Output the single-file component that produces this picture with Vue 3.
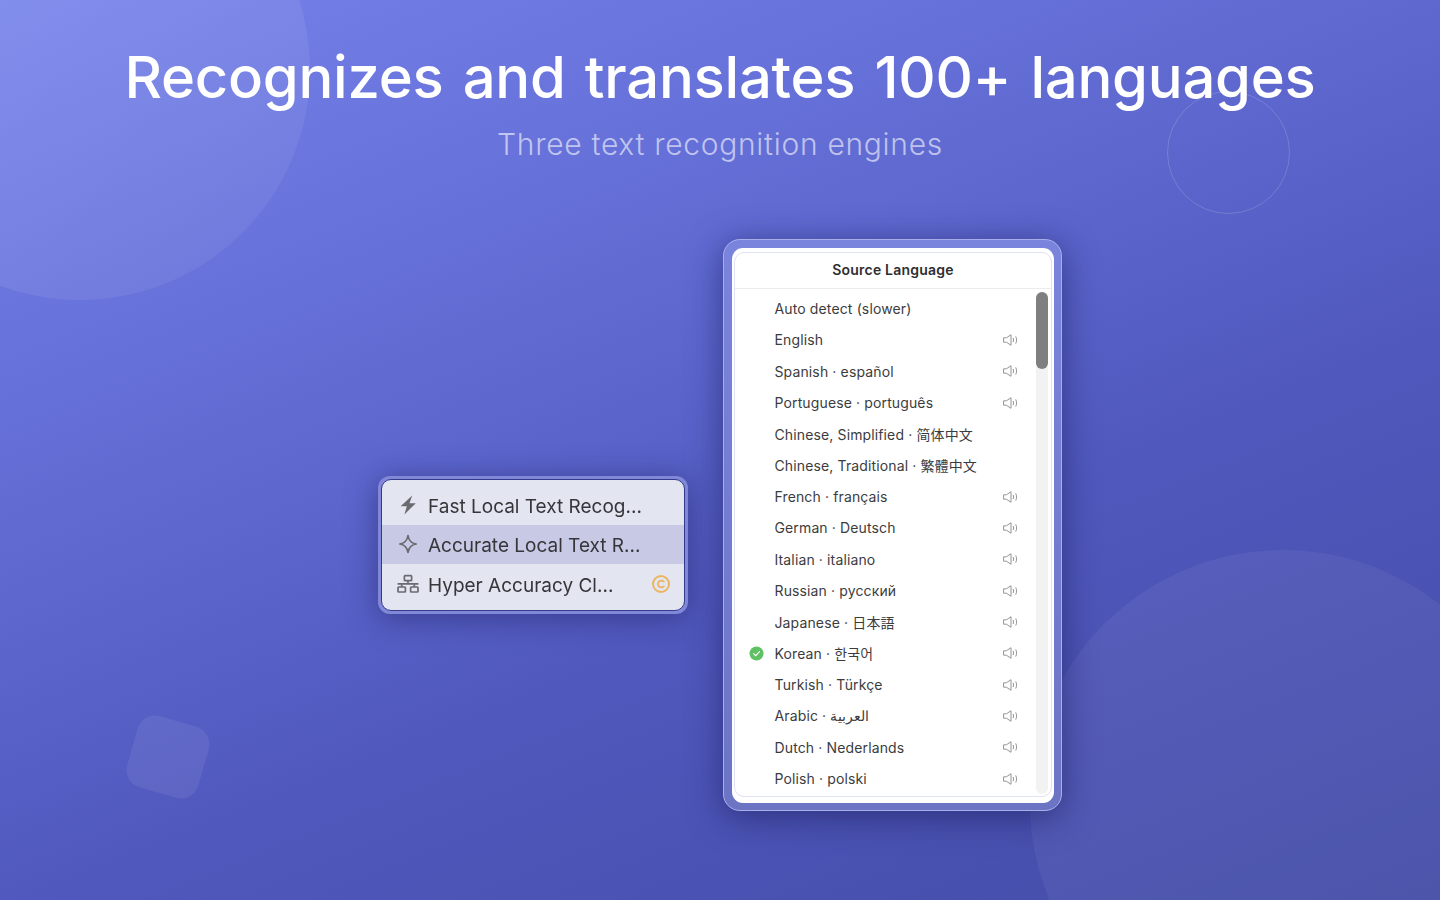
<template>
  <div class="page">
    <div class="deco deco-big"></div>
    <div class="deco deco-ring"></div>
    <div class="deco deco-corner"></div>
    <div class="deco deco-square"></div>

    <header class="hero">
      <h1>Recognizes and translates 100+ languages</h1>
      <p>Three text recognition engines</p>
    </header>

    <main class="stage">
      <section class="engines">
        <div class="engines-inner">
          <div v-for="e in engines" :key="e.name" class="engine" :class="{ active: e.active }">
            <svg v-if="e.icon === 'bolt'" class="engine-icon" viewBox="0 0 22 20">
              <path d="M15.2.6 3.6 11.2h6.2L7.4 19.4 18.8 8.2h-6.3z" fill="#6a6b70" />
            </svg>
            <svg v-else-if="e.icon === 'spark'" class="engine-icon" viewBox="0 0 22 20">
              <path d="M11 1.5c.8 5.4 2.9 7.7 8.2 8.5-5.3.8-7.4 3.1-8.2 8.5-.8-5.4-2.9-7.7-8.2-8.5 5.3-.8 7.4-3.1 8.2-8.5z" fill="none" stroke="#6a6b70" stroke-width="1.7" stroke-linejoin="round" />
            </svg>
            <svg v-else class="engine-icon" viewBox="0 0 22 20">
              <g fill="none" stroke="#6a6b70" stroke-width="1.7">
                <rect x="7.4" y="1.6" width="7.2" height="5" rx=".7" />
                <rect x="1" y="13" width="7.4" height="5" rx=".7" />
                <rect x="13.6" y="13" width="7.4" height="5" rx=".7" />
                <path d="M.6 9.9h20.8M11 6.6v3.3M4.7 9.9V13M17.3 9.9V13" />
              </g>
            </svg>
            <span class="engine-name">{{ e.name }}</span>
            <svg v-if="e.paid" class="coin" viewBox="0 0 20 20">
              <circle cx="10" cy="10" r="8" fill="none" stroke="#edb45c" stroke-width="1.9" />
              <path d="M12.8 7.6a3.4 3.4 0 1 0 0 4.8" fill="none" stroke="#edb45c" stroke-width="1.8" stroke-linecap="round" />
            </svg>
          </div>
        </div>
      </section>

      <section class="picker">
        <div class="picker-sheet">
          <div class="picker-inner">
            <div class="picker-title">Source Language</div>
            <div class="picker-body">
              <ul class="lang-list">
                <li v-for="l in languages" :key="l.name" class="lang">
                  <span class="check-slot">
                    <svg v-if="l.selected" viewBox="0 0 16 16" class="check">
                      <circle cx="8" cy="8" r="7.5" fill="#5fc163" />
                      <path d="M4.9 8.2 7.1 10.4 11.2 5.9" fill="none" stroke="#fff" stroke-width="1.2" stroke-linecap="round" stroke-linejoin="round" />
                    </svg>
                  </span>
                  <span class="lang-name">{{ l.name }}</span>
                  <svg v-if="l.voice" class="speaker" viewBox="0 0 15 12">
                    <g fill="none" stroke="#949496" stroke-width="1">
                      <path d="M.6 3.8h2.8L8 .7v10.6L3.4 8.2H.6z" stroke-linejoin="round" />
                      <path d="M10.2 4.3c.5 1.1.5 2.3 0 3.4M12.9 2.8c1 2 1 4.4 0 6.4" stroke-linecap="round" />
                    </g>
                  </svg>
                </li>
              </ul>
              <div class="scroll-track"><div class="scroll-thumb"></div></div>
            </div>
          </div>
        </div>
      </section>
    </main>
  </div>
</template>

<script setup>
const engines = [
  { name: 'Fast Local Text Recog...', icon: 'bolt' },
  { name: 'Accurate Local Text R...', icon: 'spark', active: true },
  { name: 'Hyper Accuracy Cl...', icon: 'net', paid: true }
]

const languages = [
  { name: 'Auto detect (slower)' },
  { name: 'English', voice: true },
  { name: 'Spanish · español', voice: true },
  { name: 'Portuguese · português', voice: true },
  { name: 'Chinese, Simplified · 简体中文' },
  { name: 'Chinese, Traditional · 繁體中文' },
  { name: 'French · français', voice: true },
  { name: 'German · Deutsch', voice: true },
  { name: 'Italian · italiano', voice: true },
  { name: 'Russian · русский', voice: true },
  { name: 'Japanese · 日本語', voice: true },
  { name: 'Korean · 한국어', voice: true, selected: true },
  { name: 'Turkish · Türkçe', voice: true },
  { name: 'Arabic · العربية', voice: true },
  { name: 'Dutch · Nederlands', voice: true },
  { name: 'Polish · polski', voice: true }
]
</script>

<style scoped>
.page {
  position: relative;
  width: 1440px;
  height: 900px;
  overflow: hidden;
  background: linear-gradient(158deg, #7683ea 0%, #6570d8 28%, #5058bd 62%, #434ca6 100%);
  font-family: Inter, "Noto Sans CJK KR", "Noto Sans CJK SC", sans-serif;
}

/* background shapes */
.deco {
  position: absolute;
}
.deco-big {
  left: -150px;
  top: -160px;
  width: 460px;
  height: 460px;
  border-radius: 50%;
  background: linear-gradient(135deg, rgba(255, 255, 255, .11), rgba(255, 255, 255, .05));
}
.deco-ring {
  left: 1167px;
  top: 91px;
  width: 123px;
  height: 123px;
  border-radius: 50%;
  border: 1px solid rgba(255, 255, 255, .16);
  box-sizing: border-box;
}
.deco-corner {
  left: 1030px;
  top: 550px;
  width: 506px;
  height: 506px;
  border-radius: 50%;
  background: rgba(255, 255, 255, .05);
}
.deco-square {
  left: 131px;
  top: 720px;
  width: 74px;
  height: 74px;
  border-radius: 18px;
  background: rgba(255, 255, 255, .07);
  transform: rotate(16deg);
}

/* heading */
.hero {
  position: relative;
  padding-top: 41px;
  text-align: center;
}
.hero h1 {
  margin: 0;
  font-size: 58px;
  line-height: 72px;
  font-weight: 500;
  letter-spacing: -.25px;
  word-spacing: 4px;
  color: #fff;
}
.hero p {
  margin: 13px 0 0;
  font-size: 30px;
  line-height: 36px;
  font-weight: 300;
  letter-spacing: .7px;
  color: rgba(255, 255, 255, .6);
}

/* panels */
.stage {
  position: absolute;
  left: 378px;
  top: 239px;
  display: flex;
  align-items: flex-start;
  gap: 35px;
}

.engines {
  margin-top: 237px;
  width: 310px;
  height: 138px;
  box-sizing: border-box;
  padding: 3px;
  border-radius: 12px;
  background: #8188d8;
  box-shadow: 0 4px 30px rgba(25, 28, 90, .5);
}
.engines-inner {
  height: 100%;
  box-sizing: border-box;
  padding: 5px 0;
  border: 1.5px solid #343a8c;
  border-radius: 10px;
  background: #e3e5f0;
  overflow: hidden;
}
.engine {
  display: flex;
  align-items: center;
  height: 39.5px;
  padding: 0 13px 0 15px;
  color: #36363a;
  font-size: 19px;
  filter: blur(.45px);
}
.engine.active {
  background: #c7c9e5;
}
.engine-icon {
  width: 22px;
  height: 20px;
  flex: none;
}
.engine-name {
  margin: 3px 0 0 9px;
  flex: 1;
  letter-spacing: 0;
}
.coin {
  width: 20px;
  height: 20px;
  flex: none;
}

.picker {
  width: 339px;
  height: 572px;
  box-sizing: border-box;
  padding: 8px 7px 7px 8px;
  border: 1px solid #a8aeea;
  border-radius: 17px;
  background: linear-gradient(180deg, #7a84dc, #6c74c4);
  box-shadow: 0 6px 34px rgba(25, 28, 90, .6);
}
.picker-sheet {
  height: 100%;
  box-sizing: border-box;
  padding: 4px 2px 6px;
  border-radius: 11px;
  background: #fff;
}
.picker-inner {
  height: 100%;
  box-sizing: border-box;
  border: 1px solid #dfe1f4;
  border-radius: 10px;
  display: flex;
  flex-direction: column;
  overflow: hidden;
}
.picker-title {
  flex: none;
  height: 35px;
  line-height: 34px;
  text-align: center;
  font-size: 14px;
  font-weight: 600;
  letter-spacing: .22px;
  color: #2e2e30;
  border-bottom: 1px solid #ececf0;
}
.picker-body {
  flex: 1;
  display: flex;
  min-height: 0;
}
.lang-list {
  flex: 1;
  margin: 0;
  padding: 4px 0 0;
  list-style: none;
}
.lang {
  display: flex;
  align-items: center;
  height: 31.33px;
  padding-left: 14px;
  font-size: 14px;
  letter-spacing: .13px;
  color: #3c3c3e;
}
.check-slot {
  width: 25.5px;
  flex: none;
  display: flex;
}
.check {
  width: 15px;
  height: 15px;
}
.lang-name {
  flex: 1;
}
.speaker {
  width: 15px;
  height: 12px;
  margin-right: 18px;
}
.scroll-track {
  flex: none;
  width: 12px;
  margin: 3px 3px 2px 0;
  background: #f2f2f3;
  border-radius: 6px;
}
.scroll-thumb {
  height: 77px;
  border-radius: 6px;
  background: #7f7f80;
}
</style>

<style>
html, body {
  margin: 0;
  background: #4c55b5;
}
</style>
